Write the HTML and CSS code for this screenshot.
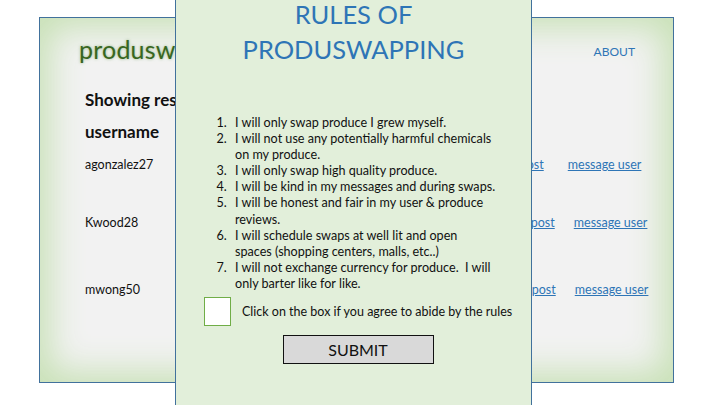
FILE: index.html
```html
<!DOCTYPE html>
<html>
<head>
<meta charset="utf-8">
<link rel="stylesheet" href="styles.css">
</head>
<body>
<div class="window">
  <header class="topbar">
    <div class="logo">produswapping</div>
    <a class="about" href="#">ABOUT</a>
  </header>
  <h2 class="showing">Showing results</h2>
  <h3 class="colhead">username</h3>
  <div class="row row1">
    <span class="user">agonzalez27</span>
    <a href="#" class="lnk post">view post</a>
    <a href="#" class="lnk msg">message user</a>
  </div>
  <div class="row row2">
    <span class="user">Kwood28</span>
    <a href="#" class="lnk post">view post</a>
    <a href="#" class="lnk msg">message user</a>
  </div>
  <div class="row row3">
    <span class="user">mwong50</span>
    <a href="#" class="lnk post">view post</a>
    <a href="#" class="lnk msg">message user</a>
  </div>
</div>

<div class="modal">
  <h1 class="title">RULES OF<br>PRODUSWAPPING</h1>
  <ol class="rules">
    <li>I will only swap produce I grew myself.</li>
    <li>I will not use any potentially harmful chemicals on my produce.</li>
    <li>I will only swap high quality produce.</li>
    <li>I will be kind in my messages and during swaps.</li>
    <li>I will be honest and fair in my user &amp; produce reviews.</li>
    <li>I will schedule swaps at well lit and open<br>spaces (shopping centers, malls, etc..)</li>
    <li>I will not exchange currency for produce.&nbsp; I will only barter like for like.</li>
  </ol>
  <div class="agree">
    <span class="box"></span>
    <span class="agree-text">Click on the box if you agree to abide by the rules</span>
  </div>
  <div class="actions">
    <button class="submit">SUBMIT</button>
  </div>
</div>
</body>
</html>
```

FILE: styles.css
```css
* { box-sizing: border-box; }
html, body { margin: 0; padding: 0; }
body {
  width: 720px;
  height: 405px;
  overflow: hidden;
  background: #ffffff;
  font-family: Lato, "Open Sans", sans-serif;
  position: relative;
}

.window {
  margin: 17px 0 0 39px;
  width: 635px;
  height: 366px;
  border: 1px solid #41719c;
  background: #f2f2f2;
  box-shadow: inset 0 0 34px 10px #c8e1b6;
  padding: 0 0 0 45px;
  overflow: hidden;
}

.topbar {
  display: flex;
  align-items: center;
  height: 66px;
}
.logo {
  margin-left: -6px;
  margin-top: -4px;
  font-size: 25px;
  color: #38661f;
  text-shadow: 0 0 3px rgba(90, 140, 60, 0.6);
  letter-spacing: 0.2px;
}
.about {
  margin-left: auto;
  margin-right: 38px;
  font-size: 12px;
  color: #2e75b6;
  text-decoration: none;
}

.showing {
  margin: 0;
  font-size: 17px;
  font-weight: 700;
  line-height: 20px;
  padding-top: 6px;
  color: #111;
}
.colhead {
  margin: 12px 0 0 0;
  font-size: 17px;
  font-weight: 700;
  line-height: 20px;
  color: #111;
}

.row {
  display: flex;
  align-items: center;
  font-size: 12.5px;
  line-height: 16px;
  color: #111;
}
.row1 { margin-top: 15px; }
.row2 { margin-top: 42px; }
.row3 { margin-top: 51px; }
.user { width: 420px; flex: none; }
.lnk { color: #2e75b6; text-decoration: underline; white-space: nowrap; }
.row1 .post { margin-left: -14px; }
.row1 .msg { margin-left: 24px; }
.row2 .post { margin-left: -3px; }
.row2 .msg { margin-left: 19px; }
.row3 .post { margin-left: -2px; }
.row3 .msg { margin-left: 19px; }

.modal {
  position: absolute;
  left: 175px;
  top: -1px;
  width: 357px;
  height: 408px;
  border: 1px solid #41719c;
  background: #e2efda;
  color: #111;
}
.title {
  margin: 0;
  text-align: center;
  font-weight: 400;
  font-size: 25.5px;
  line-height: 35px;
  color: #2e75b6;
  margin-top: -3px;
}
.rules {
  margin: 48px 0 0 0;
  padding: 0 28px 0 54px;
  font-size: 12.6px;
  line-height: 16.1px;
}
.rules li { padding-left: 5px; }

.agree {
  display: flex;
  align-items: center;
  margin: 5px 0 0 28px;
}
.box {
  width: 27px;
  height: 29px;
  background: #fff;
  border: 1px solid #70ad47;
  flex: none;
}
.agree-text {
  margin-left: 11px;
  font-size: 12.5px;
  white-space: nowrap;
}
.actions {
  display: flex;
  justify-content: center;
  margin-top: 9px;
}
.submit {
  margin-left: 9px;
  width: 151px;
  height: 29px;
  background: #d9d9d9;
  border: 1px solid #111;
  font-family: inherit;
  font-size: 16px;
  color: #111;
  padding: 0;
}
```
